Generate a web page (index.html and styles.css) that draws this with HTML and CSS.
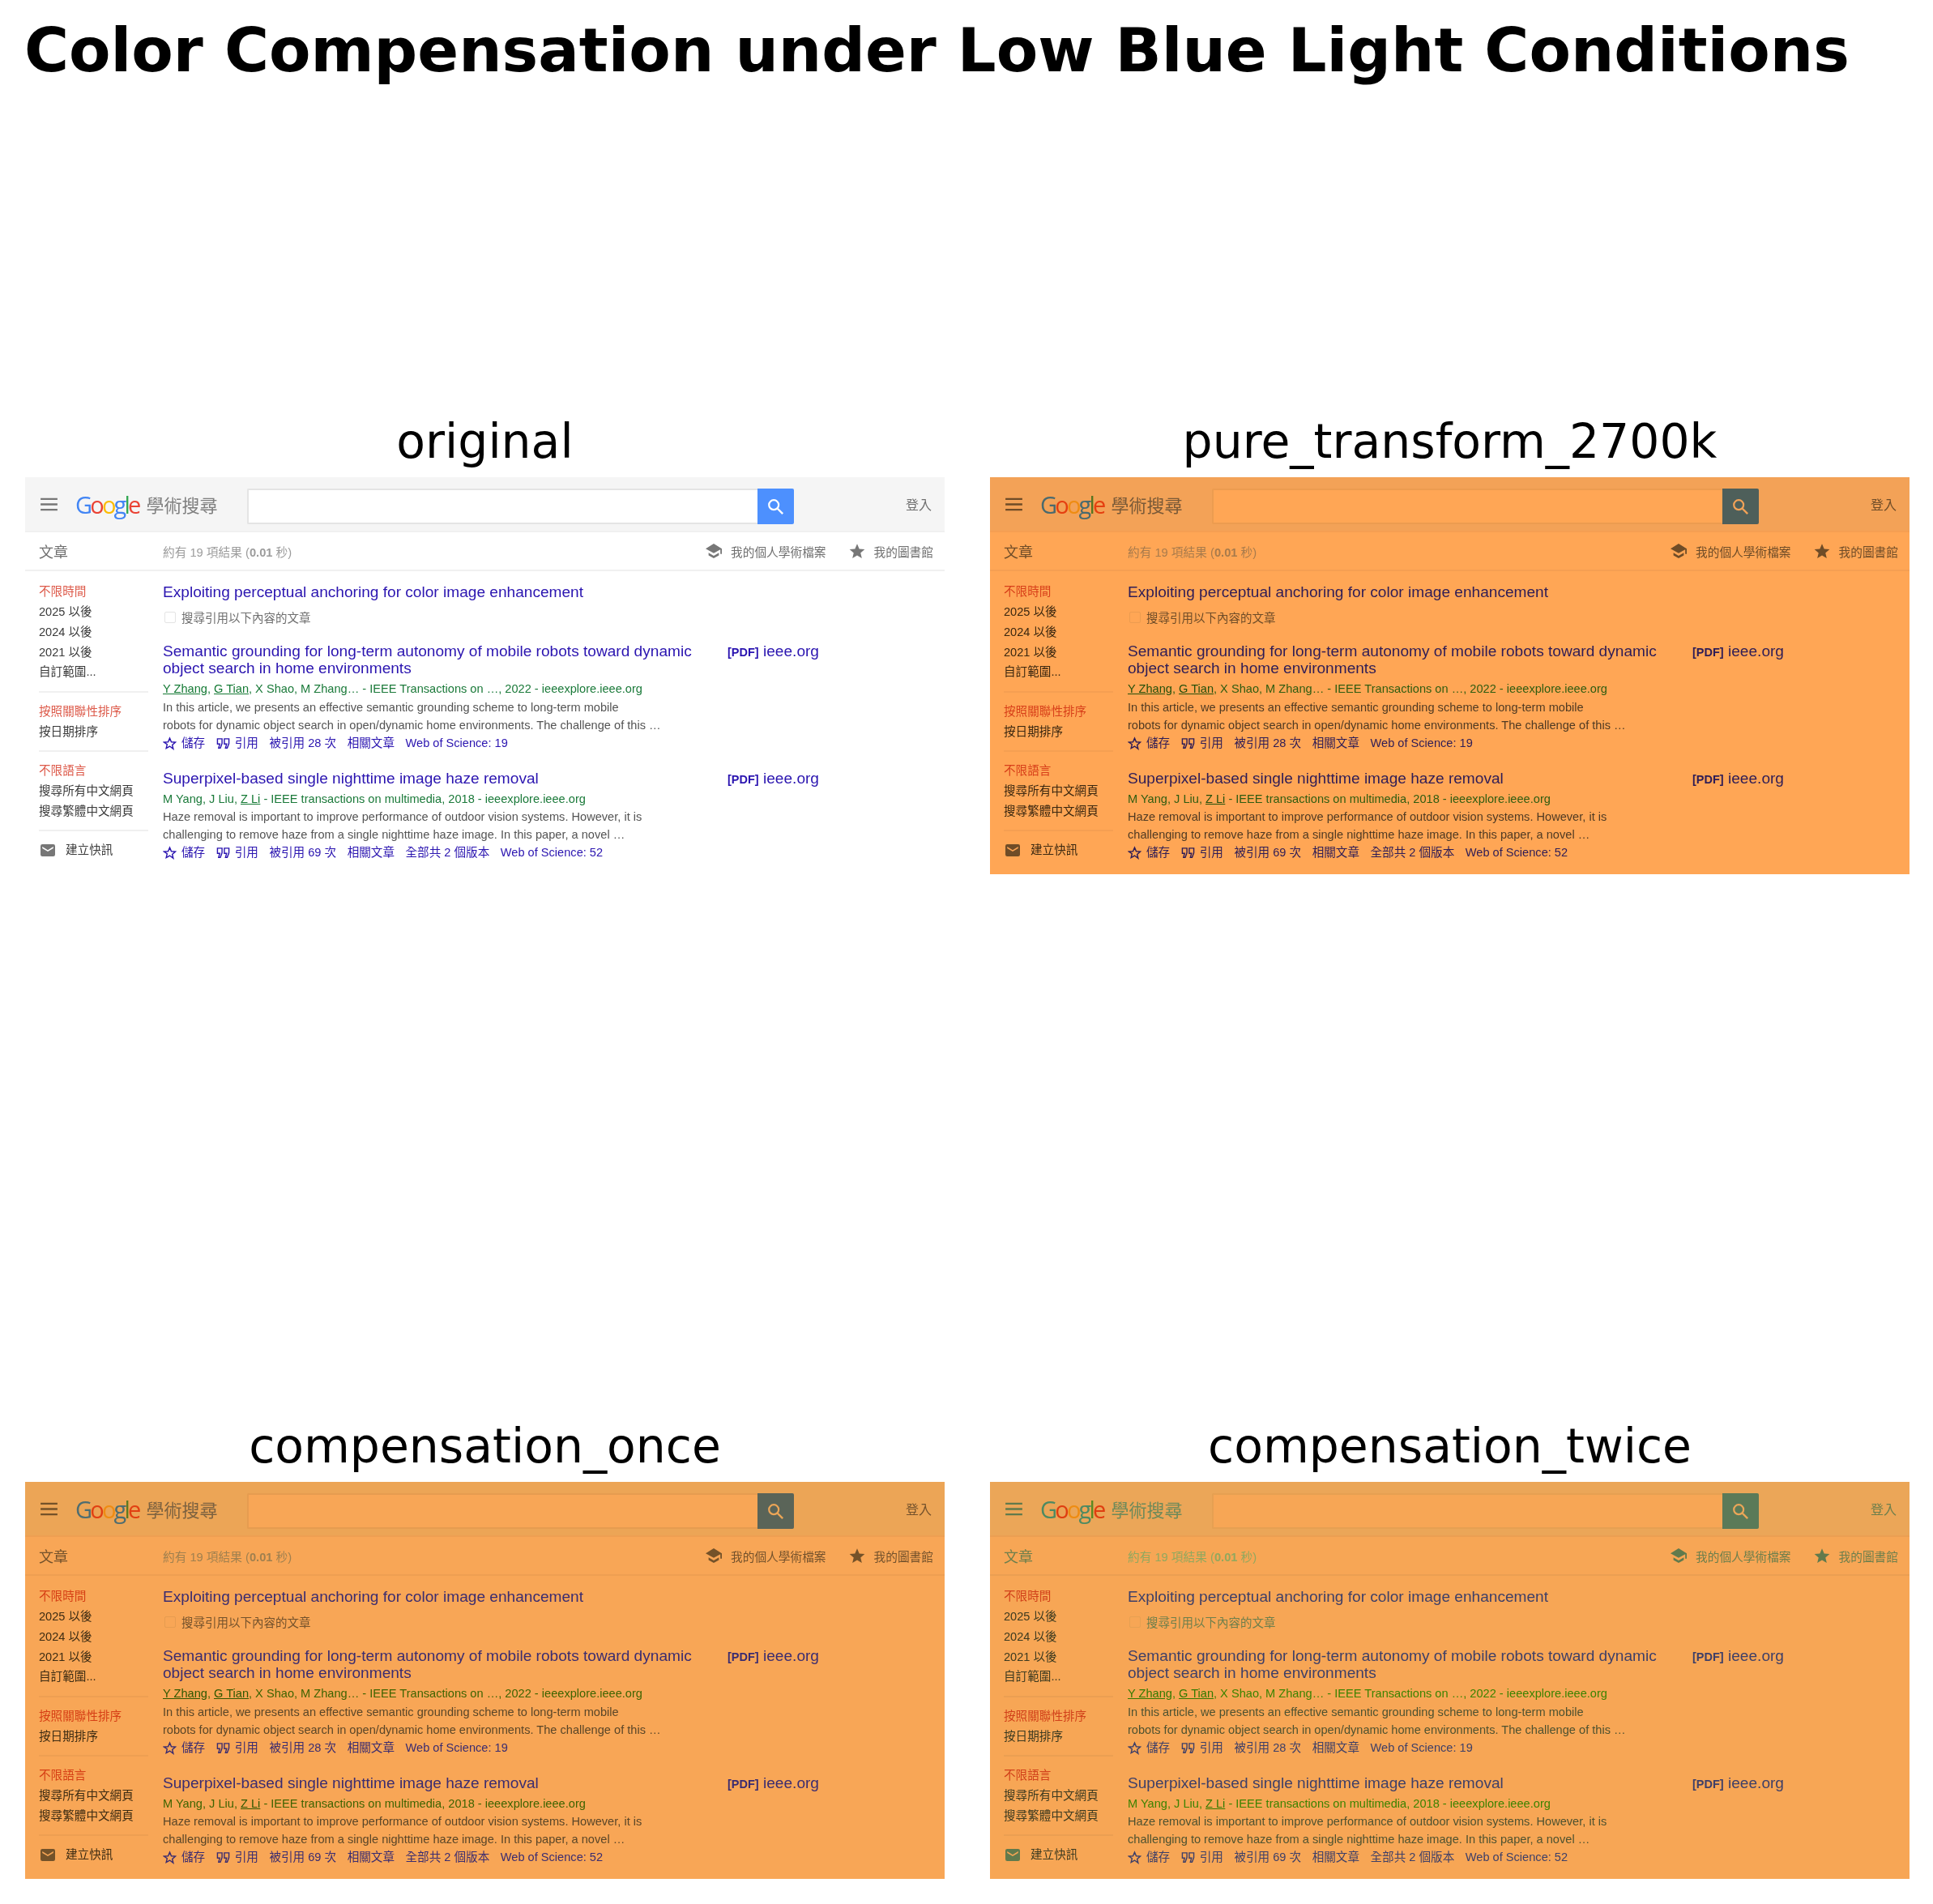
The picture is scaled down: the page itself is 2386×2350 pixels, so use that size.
FILE: index.html
```html
<!DOCTYPE html>
<html lang="zh-Hant">
<head>
    <meta charset="UTF-8">
    <title>Color Compensation under Low Blue Light Conditions</title>
    <link rel="stylesheet" href="styles.css">
</head>
<body>
    <svg class="sprites" width="0" height="0">
        <symbol id="i-menu" viewBox="0 0 24 18"><path d="M1 2h22M1 9h22M1 16h22" fill="none" stroke="currentColor" stroke-width="2.4"/></symbol>
        <symbol id="i-search" viewBox="0 0 24 24"><circle cx="10" cy="10" r="6.5" fill="none" stroke="currentColor" stroke-width="2.4"/><path d="M15 15l7 7" fill="none" stroke="currentColor" stroke-width="2.6"/></symbol>
        <symbol id="i-cap" viewBox="0 0 24 22"><path d="M12 1L1 8l11 6 9-5v6h2V8z" fill="currentColor"/><path d="M5 13.5v3.5l7 4 7-4v-3.5l-7 4z" fill="currentColor"/></symbol>
        <symbol id="i-star" viewBox="0 0 24 24"><path d="M12 1.5l3.2 7.4 8 .7-6.1 5.3 1.9 7.9L12 18.6l-7 4.2 1.9-7.9L.8 9.600l8-.7z" fill="currentColor"/></symbol>
        <symbol id="i-star-o" viewBox="0 0 24 24"><path d="M12 3l2.800 6.500 7 .6-5.300 4.600 1.600 6.900L12 17l-6.100 3.600 1.600-6.900L2.200 10.100l7-.6z" fill="none" stroke="currentColor" stroke-width="2"/></symbol>
        <symbol id="i-quote" viewBox="0 0 24 24"><path d="M2 4h8v8l-3 8H4l2-7H2zM14 4h8v8l-3 8h-3l2-7h-4z" fill="none" stroke="currentColor" stroke-width="2"/></symbol>
        <symbol id="i-mail" viewBox="0 0 24 20"><path d="M3 0h18a3 3 0 0 1 3 3v14a3 3 0 0 1-3 3H3a3 3 0 0 1-3-3V3a3 3 0 0 1 3-3zm0 4v2.500l9 5.500 9-5.500V4l-9 5.500z" fill="currentColor" fill-rule="evenodd"/></symbol>
    </svg>

    <h1 class="fig-title">Color Compensation under Low Blue Light Conditions</h1>

    <div class="fig-grid">
        <!-- original -->
        <section class="cell">
            <h2 class="cell-title">original</h2>
            <div class="scholar original">
                <header class="bar">
                    <svg class="menu"><use href="#i-menu"/></svg>
                    <span class="logo"><b class="g1">G</b><b class="g2">o</b><b class="g3">o</b><b class="g1">g</b><b class="g4">l</b><b class="g2">e</b></span>
                    <span class="wordmark">學術搜尋</span>
                    <div class="search"><div class="search-input"></div><div class="search-btn"><svg><use href="#i-search"/></svg></div></div>
                    <span class="login">登入</span>
                </header>
                <div class="subbar">
                    <span class="sub-label">文章</span>
                    <span class="sub-count">約有 19 項結果 (<b>0.01</b> 秒)</span>
                    <span class="sub-link first"><svg class="cap"><use href="#i-cap"/></svg>我的個人學術檔案</span>
                    <span class="sub-link"><svg class="star"><use href="#i-star"/></svg>我的圖書館</span>
                </div>
                <div class="content">
                    <aside class="side">
                        <div class="side-group"><a class="on">不限時間</a><a>2025 以後</a><a>2024 以後</a><a>2021 以後</a><a>自訂範圍...</a></div>
                        <div class="side-group"><a class="on">按照關聯性排序</a><a>按日期排序</a></div>
                        <div class="side-group"><a class="on">不限語言</a><a>搜尋所有中文網頁</a><a>搜尋繁體中文網頁</a></div>
                        <a class="alert"><svg><use href="#i-mail"/></svg>建立快訊</a>
                    </aside>
                    <main class="results">
                        <div class="query">Exploiting perceptual anchoring for color image enhancement</div>
                        <label class="cited"><i class="box"></i>搜尋引用以下內容的文章</label>
                        <article class="result">
                            <div class="result-body">
                                <div class="r-title">Semantic grounding for long-term autonomy of mobile robots toward dynamic<br>object search in home environments</div>
                                <div class="r-meta"><u>Y Zhang</u>, <u>G Tian</u>, X Shao, M Zhang… - IEEE Transactions on …, 2022 - ieeexplore.ieee.org</div>
                                <div class="r-text">In this article, we presents an effective semantic grounding scheme to long-term mobile<br>robots for dynamic object search in open/dynamic home environments. The challenge of this …</div>
                                <div class="r-actions"><span><svg><use href="#i-star-o"/></svg>儲存</span><span><svg><use href="#i-quote"/></svg>引用</span><span>被引用 28 次</span><span>相關文章</span><span>Web of Science: 19</span></div>
                            </div>
                            <div class="r-pdf"><b>[PDF]</b> ieee.org</div>
                        </article>
                        <article class="result">
                            <div class="result-body">
                                <div class="r-title">Superpixel-based single nighttime image haze removal</div>
                                <div class="r-meta"><span>M Yang, J Liu, <u>Z Li</u> - IEEE transactions on multimedia, 2018 - ieeexplore.ieee.org</span></div>
                                <div class="r-text">Haze removal is important to improve performance of outdoor vision systems. However, it is<br>challenging to remove haze from a single nighttime haze image. In this paper, a novel …</div>
                                <div class="r-actions"><span><svg><use href="#i-star-o"/></svg>儲存</span><span><svg><use href="#i-quote"/></svg>引用</span><span>被引用 69 次</span><span>相關文章</span><span>全部共 2 個版本</span><span>Web of Science: 52</span></div>
                            </div>
                            <div class="r-pdf"><b>[PDF]</b> ieee.org</div>
                        </article>
                    </main>
                </div>
            </div>
        </section>

        <!-- pure_transform_2700k -->
        <section class="cell">
            <h2 class="cell-title">pure_transform_2700k</h2>
            <div class="scholar pure">
                <header class="bar">
                    <svg class="menu"><use href="#i-menu"/></svg>
                    <span class="logo"><b class="g1">G</b><b class="g2">o</b><b class="g3">o</b><b class="g1">g</b><b class="g4">l</b><b class="g2">e</b></span>
                    <span class="wordmark">學術搜尋</span>
                    <div class="search"><div class="search-input"></div><div class="search-btn"><svg><use href="#i-search"/></svg></div></div>
                    <span class="login">登入</span>
                </header>
                <div class="subbar">
                    <span class="sub-label">文章</span>
                    <span class="sub-count">約有 19 項結果 (<b>0.01</b> 秒)</span>
                    <span class="sub-link first"><svg class="cap"><use href="#i-cap"/></svg>我的個人學術檔案</span>
                    <span class="sub-link"><svg class="star"><use href="#i-star"/></svg>我的圖書館</span>
                </div>
                <div class="content">
                    <aside class="side">
                        <div class="side-group"><a class="on">不限時間</a><a>2025 以後</a><a>2024 以後</a><a>2021 以後</a><a>自訂範圍...</a></div>
                        <div class="side-group"><a class="on">按照關聯性排序</a><a>按日期排序</a></div>
                        <div class="side-group"><a class="on">不限語言</a><a>搜尋所有中文網頁</a><a>搜尋繁體中文網頁</a></div>
                        <a class="alert"><svg><use href="#i-mail"/></svg>建立快訊</a>
                    </aside>
                    <main class="results">
                        <div class="query">Exploiting perceptual anchoring for color image enhancement</div>
                        <label class="cited"><i class="box"></i>搜尋引用以下內容的文章</label>
                        <article class="result">
                            <div class="result-body">
                                <div class="r-title">Semantic grounding for long-term autonomy of mobile robots toward dynamic<br>object search in home environments</div>
                                <div class="r-meta"><u>Y Zhang</u>, <u>G Tian</u>, X Shao, M Zhang… - IEEE Transactions on …, 2022 - ieeexplore.ieee.org</div>
                                <div class="r-text">In this article, we presents an effective semantic grounding scheme to long-term mobile<br>robots for dynamic object search in open/dynamic home environments. The challenge of this …</div>
                                <div class="r-actions"><span><svg><use href="#i-star-o"/></svg>儲存</span><span><svg><use href="#i-quote"/></svg>引用</span><span>被引用 28 次</span><span>相關文章</span><span>Web of Science: 19</span></div>
                            </div>
                            <div class="r-pdf"><b>[PDF]</b> ieee.org</div>
                        </article>
                        <article class="result">
                            <div class="result-body">
                                <div class="r-title">Superpixel-based single nighttime image haze removal</div>
                                <div class="r-meta"><span>M Yang, J Liu, <u>Z Li</u> - IEEE transactions on multimedia, 2018 - ieeexplore.ieee.org</span></div>
                                <div class="r-text">Haze removal is important to improve performance of outdoor vision systems. However, it is<br>challenging to remove haze from a single nighttime haze image. In this paper, a novel …</div>
                                <div class="r-actions"><span><svg><use href="#i-star-o"/></svg>儲存</span><span><svg><use href="#i-quote"/></svg>引用</span><span>被引用 69 次</span><span>相關文章</span><span>全部共 2 個版本</span><span>Web of Science: 52</span></div>
                            </div>
                            <div class="r-pdf"><b>[PDF]</b> ieee.org</div>
                        </article>
                    </main>
                </div>
            </div>
        </section>

        <!-- compensation_once -->
        <section class="cell">
            <h2 class="cell-title">compensation_once</h2>
            <div class="scholar once">
                <header class="bar">
                    <svg class="menu"><use href="#i-menu"/></svg>
                    <span class="logo"><b class="g1">G</b><b class="g2">o</b><b class="g3">o</b><b class="g1">g</b><b class="g4">l</b><b class="g2">e</b></span>
                    <span class="wordmark">學術搜尋</span>
                    <div class="search"><div class="search-input"></div><div class="search-btn"><svg><use href="#i-search"/></svg></div></div>
                    <span class="login">登入</span>
                </header>
                <div class="subbar">
                    <span class="sub-label">文章</span>
                    <span class="sub-count">約有 19 項結果 (<b>0.01</b> 秒)</span>
                    <span class="sub-link first"><svg class="cap"><use href="#i-cap"/></svg>我的個人學術檔案</span>
                    <span class="sub-link"><svg class="star"><use href="#i-star"/></svg>我的圖書館</span>
                </div>
                <div class="content">
                    <aside class="side">
                        <div class="side-group"><a class="on">不限時間</a><a>2025 以後</a><a>2024 以後</a><a>2021 以後</a><a>自訂範圍...</a></div>
                        <div class="side-group"><a class="on">按照關聯性排序</a><a>按日期排序</a></div>
                        <div class="side-group"><a class="on">不限語言</a><a>搜尋所有中文網頁</a><a>搜尋繁體中文網頁</a></div>
                        <a class="alert"><svg><use href="#i-mail"/></svg>建立快訊</a>
                    </aside>
                    <main class="results">
                        <div class="query">Exploiting perceptual anchoring for color image enhancement</div>
                        <label class="cited"><i class="box"></i>搜尋引用以下內容的文章</label>
                        <article class="result">
                            <div class="result-body">
                                <div class="r-title">Semantic grounding for long-term autonomy of mobile robots toward dynamic<br>object search in home environments</div>
                                <div class="r-meta"><u>Y Zhang</u>, <u>G Tian</u>, X Shao, M Zhang… - IEEE Transactions on …, 2022 - ieeexplore.ieee.org</div>
                                <div class="r-text">In this article, we presents an effective semantic grounding scheme to long-term mobile<br>robots for dynamic object search in open/dynamic home environments. The challenge of this …</div>
                                <div class="r-actions"><span><svg><use href="#i-star-o"/></svg>儲存</span><span><svg><use href="#i-quote"/></svg>引用</span><span>被引用 28 次</span><span>相關文章</span><span>Web of Science: 19</span></div>
                            </div>
                            <div class="r-pdf"><b>[PDF]</b> ieee.org</div>
                        </article>
                        <article class="result">
                            <div class="result-body">
                                <div class="r-title">Superpixel-based single nighttime image haze removal</div>
                                <div class="r-meta"><span>M Yang, J Liu, <u>Z Li</u> - IEEE transactions on multimedia, 2018 - ieeexplore.ieee.org</span></div>
                                <div class="r-text">Haze removal is important to improve performance of outdoor vision systems. However, it is<br>challenging to remove haze from a single nighttime haze image. In this paper, a novel …</div>
                                <div class="r-actions"><span><svg><use href="#i-star-o"/></svg>儲存</span><span><svg><use href="#i-quote"/></svg>引用</span><span>被引用 69 次</span><span>相關文章</span><span>全部共 2 個版本</span><span>Web of Science: 52</span></div>
                            </div>
                            <div class="r-pdf"><b>[PDF]</b> ieee.org</div>
                        </article>
                    </main>
                </div>
            </div>
        </section>

        <!-- compensation_twice -->
        <section class="cell">
            <h2 class="cell-title">compensation_twice</h2>
            <div class="scholar twice">
                <header class="bar">
                    <svg class="menu"><use href="#i-menu"/></svg>
                    <span class="logo"><b class="g1">G</b><b class="g2">o</b><b class="g3">o</b><b class="g1">g</b><b class="g4">l</b><b class="g2">e</b></span>
                    <span class="wordmark">學術搜尋</span>
                    <div class="search"><div class="search-input"></div><div class="search-btn"><svg><use href="#i-search"/></svg></div></div>
                    <span class="login">登入</span>
                </header>
                <div class="subbar">
                    <span class="sub-label">文章</span>
                    <span class="sub-count">約有 19 項結果 (<b>0.01</b> 秒)</span>
                    <span class="sub-link first"><svg class="cap"><use href="#i-cap"/></svg>我的個人學術檔案</span>
                    <span class="sub-link"><svg class="star"><use href="#i-star"/></svg>我的圖書館</span>
                </div>
                <div class="content">
                    <aside class="side">
                        <div class="side-group"><a class="on">不限時間</a><a>2025 以後</a><a>2024 以後</a><a>2021 以後</a><a>自訂範圍...</a></div>
                        <div class="side-group"><a class="on">按照關聯性排序</a><a>按日期排序</a></div>
                        <div class="side-group"><a class="on">不限語言</a><a>搜尋所有中文網頁</a><a>搜尋繁體中文網頁</a></div>
                        <a class="alert"><svg><use href="#i-mail"/></svg>建立快訊</a>
                    </aside>
                    <main class="results">
                        <div class="query">Exploiting perceptual anchoring for color image enhancement</div>
                        <label class="cited"><i class="box"></i>搜尋引用以下內容的文章</label>
                        <article class="result">
                            <div class="result-body">
                                <div class="r-title">Semantic grounding for long-term autonomy of mobile robots toward dynamic<br>object search in home environments</div>
                                <div class="r-meta"><u>Y Zhang</u>, <u>G Tian</u>, X Shao, M Zhang… - IEEE Transactions on …, 2022 - ieeexplore.ieee.org</div>
                                <div class="r-text">In this article, we presents an effective semantic grounding scheme to long-term mobile<br>robots for dynamic object search in open/dynamic home environments. The challenge of this …</div>
                                <div class="r-actions"><span><svg><use href="#i-star-o"/></svg>儲存</span><span><svg><use href="#i-quote"/></svg>引用</span><span>被引用 28 次</span><span>相關文章</span><span>Web of Science: 19</span></div>
                            </div>
                            <div class="r-pdf"><b>[PDF]</b> ieee.org</div>
                        </article>
                        <article class="result">
                            <div class="result-body">
                                <div class="r-title">Superpixel-based single nighttime image haze removal</div>
                                <div class="r-meta"><span>M Yang, J Liu, <u>Z Li</u> - IEEE transactions on multimedia, 2018 - ieeexplore.ieee.org</span></div>
                                <div class="r-text">Haze removal is important to improve performance of outdoor vision systems. However, it is<br>challenging to remove haze from a single nighttime haze image. In this paper, a novel …</div>
                                <div class="r-actions"><span><svg><use href="#i-star-o"/></svg>儲存</span><span><svg><use href="#i-quote"/></svg>引用</span><span>被引用 69 次</span><span>相關文章</span><span>全部共 2 個版本</span><span>Web of Science: 52</span></div>
                            </div>
                            <div class="r-pdf"><b>[PDF]</b> ieee.org</div>
                        </article>
                    </main>
                </div>
            </div>
        </section>
    </div>
</body>
</html>
```

FILE: styles.css
```css
body {
    margin: 0;
    background: #fff;
    color: #000;
    font-family: "DejaVu Sans", sans-serif;
}
.sprites {
    position: absolute;
}
.fig-title {
    margin: 0;
    height: 100px;
    padding-left: 30px;
    font-size: 75px;
    line-height: 124px;
    font-weight: 700;
    white-space: nowrap;
}
.fig-grid {
    display: grid;
    grid-template-columns: 1135px 1135px;
    grid-template-rows: 979px 1240px;
    column-gap: 56px;
    padding-left: 31px;
}
.cell {
    display: flex;
    flex-direction: column;
    justify-content: flex-end;
}
.cell-title {
    margin: 0 0 11px;
    font-size: 58.4px;
    line-height: 66px;
    font-weight: 400;
    text-align: center;
}

/* colour sets */
.original {
    --bg: #fff; --bar: #f5f5f5; --edge: #f0f0f0; --field: #fff; --field-edge: #e4e4e4;
    --link: #2a14b0; --green: #1b7a3a; --under: #157a35; --text: #545454; --muted: #9c9c9c;
    --dark: #3a3a3a; --red: #dd5a4a; --btn: #4d90fe; --btn-icon: #fff; --icon: #777; --label: #6f6f6f;
    --g1: #4285f4; --g2: #ea4335; --g3: #fbbc05; --g4: #34a853; --word: #808080;
}
.pure {
    --bg: #ffa655; --bar: #f3a257; --edge: #f59f52; --field: #ffa655; --field-edge: #ec9c50;
    --link: #2e1c56; --green: #2f5c10; --under: #24500a; --text: #4f3a23; --muted: #a87b4c;
    --dark: #3a2710; --red: #d8401a; --btn: #4e5f5a; --btn-icon: #f3a257; --icon: #6f4c27; --label: #6e4c28;
    --g1: #4a6a6e; --g2: #e53f10; --g3: #ee8c12; --g4: #56751f; --word: #7a5a38;
}
.once {
    --bg: #f8a656; --bar: #eca556; --edge: #ee9f52; --field: #f8a656; --field-edge: #e69c50;
    --link: #3b2c70; --green: #3f6400; --under: #2f5800; --text: #5a4628; --muted: #a0804f;
    --dark: #3d2c13; --red: #d63f15; --btn: #5a6458; --btn-icon: #eca556; --icon: #745229; --label: #74522c;
    --g1: #4f6d70; --g2: #e14012; --g3: #ee8c12; --g4: #5f7a20; --word: #7d6240;
}
.twice {
    --bg: #f7a655; --bar: #eba658; --edge: #eb9f52; --field: #f7a655; --field-edge: #e6a052;
    --link: #3e3f68; --green: #3d8300; --under: #347a00; --text: #4e5230; --muted: #91a85e;
    --dark: #3c3a20; --red: #d1411a; --btn: #5b7a58; --btn-icon: #eba658; --icon: #617a4c; --label: #6d7f4c;
    --g1: #4d8a62; --g2: #df3e10; --g3: #ee8c12; --g4: #5c8a20; --word: #6f8a5a;
}

/* scholar screenshot */
.scholar {
    width: 1135px;
    height: 490px;
    overflow: hidden;
    background: var(--bg);
    color: var(--dark);
    font-family: "Liberation Sans", "Noto Sans CJK TC", sans-serif;
    filter: blur(0.45px);
}
.bar {
    display: flex;
    align-items: center;
    height: 68px;
    box-sizing: border-box;
    padding: 0 16px 0 18px;
    background: var(--bar);
    border-bottom: 2px solid var(--edge);
}
.menu {
    width: 23px;
    height: 17px;
    color: var(--icon);
}
.logo {
    margin-left: 21px;
    font-family: "Open Sans", sans-serif;
    font-size: 29px;
    letter-spacing: -2.8px;
    line-height: 1;
}
.logo b {
    font-weight: 400;
}
.logo .g1 { color: var(--g1); }
.logo .g2 { color: var(--g2); }
.logo .g3 { color: var(--g3); }
.logo .g4 { color: var(--g4); }
.wordmark {
    margin-left: 9px;
    font-size: 22px;
    color: var(--word);
}
.search {
    display: flex;
    height: 44px;
    margin: 5px 0 0 36px;
}
.search-input {
    width: 630px;
    box-sizing: border-box;
    background: var(--field);
    border: 2px solid var(--field-edge);
    border-right: none;
    border-radius: 2px 0 0 2px;
}
.search-btn {
    display: flex;
    align-items: center;
    justify-content: center;
    width: 45px;
    background: var(--btn);
    border-radius: 0 2px 2px 0;
    color: var(--btn-icon);
}
.search-btn svg {
    width: 22px;
    height: 22px;
}
.login {
    margin-left: auto;
    font-size: 16px;
    color: var(--label);
}
.subbar {
    display: flex;
    align-items: center;
    height: 48px;
    box-sizing: border-box;
    padding: 0 14px 0 17px;
    border-bottom: 2px solid var(--edge);
    font-size: 14.7px;
}
.sub-label {
    width: 153px;
    font-size: 18px;
    color: var(--label);
}
.sub-count {
    font-size: 14.7px;
    color: var(--muted);
}
.sub-link {
    display: flex;
    align-items: center;
    margin-left: 28px;
    color: var(--label);
}
.sub-link.first {
    margin-left: auto;
}
.sub-link svg {
    color: var(--icon);
}
.cap {
    width: 22px;
    height: 20px;
    margin-right: 10px;
}
.star {
    width: 20px;
    height: 20px;
    margin-right: 11px;
}
.content {
    display: flex;
}
.side {
    width: 170px;
    flex: none;
    box-sizing: border-box;
    padding: 13px 18px 0 17px;
    font-size: 14.6px;
    line-height: 24.85px;
}
.side a {
    display: block;
    white-space: nowrap;
}
.side-group {
    margin-bottom: 11px;
    padding-bottom: 10.5px;
    border-bottom: 2px solid var(--edge);
}
.side .on {
    color: var(--red);
}
.alert {
    display: flex !important;
    align-items: center;
    color: var(--dark);
}
.alert svg {
    width: 18px;
    height: 15px;
    margin: 0 13px 0 2px;
    color: var(--icon);
}
.results {
    flex: 1;
    padding-top: 15px;
}
.query,
.r-title {
    color: var(--link);
    font-size: 19.1px;
    line-height: 21.5px;
    white-space: nowrap;
}
.cited {
    display: flex;
    align-items: center;
    height: 24px;
    margin: 8px 0 19px;
    font-size: 14.5px;
    color: var(--label);
}
.box {
    width: 12px;
    height: 12px;
    margin: 0 7px 0 2px;
    border: 1.5px solid var(--field-edge);
    border-radius: 2px;
    background: var(--field);
}
.result {
    display: flex;
    margin-bottom: 21px;
}
.result-body {
    width: 697px;
    flex: none;
}
.r-meta {
    margin: 3.5px 0 0.5px;
    color: var(--green);
    font-size: 14.6px;
    line-height: 22px;
    white-space: nowrap;
}
.r-meta u {
    color: var(--under);
}
.r-text {
    color: var(--text);
    font-size: 14.6px;
    line-height: 22px;
    white-space: nowrap;
}
.r-actions {
    display: flex;
    gap: 13.5px;
    color: var(--link);
    font-size: 14.6px;
    line-height: 23px;
    white-space: nowrap;
}
.r-actions span {
    display: flex;
    align-items: center;
}
.r-actions svg {
    width: 17px;
    height: 17px;
    margin-right: 6px;
}
.r-pdf {
    color: var(--link);
    font-size: 19.1px;
    line-height: 21.5px;
    white-space: nowrap;
}
.r-pdf b {
    font-size: 14.5px;
}
```
